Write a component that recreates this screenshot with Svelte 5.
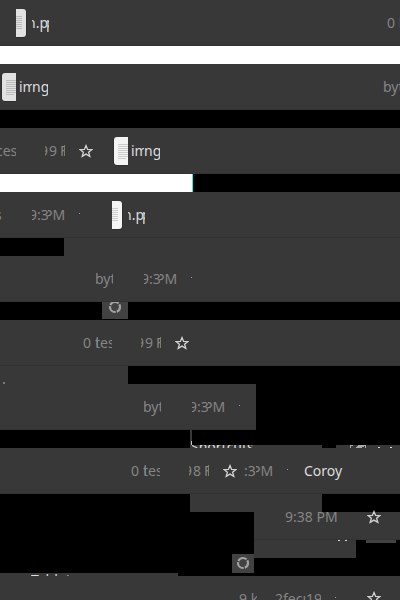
<script>
  // x/y are measured inside each 64px strip; off and up shift the glyphs inside their clip window
  const t = (x, w, s, off = 0, bright = false, y = 13, h = 20, up = 0) => ({ k: 'text', x, y, w, h, s, off, bright, up });
  const box = (x, y, w, h, color) => ({ k: 'box', x, y, w, h, color });
  const star = (x, y = 16) => ({ k: 'star', x, y, w: 14, h: 14 });
  const ring = (x, y, w, h, cx, cy) => ({ k: 'ring', x, y, w, h, cx, cy });
  const doc = (x, w, half, dim = false) => ({ k: 'doc', x, y: 8, w, h: 30, half, dim });
  const dot = (x, y = 21) => box(x, y, 1, 1, '#999999');
  const g = '#383838';
  const time = (x) => [t(x, 16, '9:3', -3), t(x + 16, 18, 'PM', -4)];
  const np = (x) => [t(x, 15, 'n.p', -5, true), t(x + 15, 2, 'p', -1, true)];
  const img = (x) => [t(x, 13, 'im', 0, true), t(x + 13, 16, 'ng', 0, true)];
  const date = (x, d) => [t(x, 3, '9', -5), t(x + 4, 9, d), t(x + 16, 3, 'F', -1), t(x + 19, 1, 'l', -1.5)];
  const bytes = (x) => [t(x, 9, '0'), t(x + 12, 3, 'b', 0.5), t(x + 12, 17, 'tes')];

  const strips = [
    { items: [doc(16, 11, 'right', true), ...np(32), t(387, 13, '0 b'), box(0, 46, 400, 18, '#ffffff')] },
    { items: [doc(1, 15, 'left', true), ...img(19), t(383, 17, 'byt')] },
    { items: [t(0, 16, 'ces', -4), ...date(45, '9'), star(79), doc(113, 15, 'left'), ...img(131), box(0, 46, 192, 18, '#ffffff'), box(192, 46, 1, 18, '#00ffff')] },
    { items: [t(0, 2, 's', -5), ...time(32), dot(79), doc(112, 11, 'right'), ...np(128), box(64, 46, 336, 18, g)] },
    { items: [t(96, 17, 'byt', -1), ...time(144), dot(191), ring(102, 46, 26, 17, 13, 5)] },
    { items: [...bytes(83), ...date(141, '9'), star(175), box(0, 46, 128, 18, g), box(3, 62, 2, 2, '#777777')] },
    {
      rowWidth: 256,
      items: [
        t(144, 17, 'byt', -1), ...time(192), dot(239),
        box(190, 46, 2, 18, g), box(190, 61, 132, 3, g), box(336, 61, 64, 3, g),
        box(191, 57, 1, 4, '#b5c8d8'),
        t(192, 64, 'Shortcuts', -1, true, 61, 3, -8),
        box(350, 61, 1, 3, '#aaaaaa'), box(351, 61, 2, 1, '#aaaaaa'),
        box(358, 61, 7, 1, '#aaaaaa'), box(357, 62, 7, 1, '#aaaaaa'), box(356, 63, 6, 1, '#aaaaaa'), box(365, 61, 1, 3, '#aaaaaa'),
        box(378, 63, 2, 1, '#dddddd'), box(390, 63, 2, 1, '#dddddd')
      ]
    },
    { items: [...bytes(131), ...date(189, '8'), star(223), t(244, 12, ':3', 0), t(256, 18, 'PM', -4), dot(287), t(304, 40, 'Coroy', 0, true), box(190, 46, 132, 18, g)] },
    {
      rowWidth: 0,
      items: [
        box(254, 0, 146, 28, g), box(254, 27, 146, 1, '#323232'), box(254, 28, 102, 18, g), box(366, 28, 30, 3, '#424242'),
        t(285, 54, '9:38 PM', 0, false, -5), star(367, -2),
        box(338, 28, 2, 1, '#dddddd'), box(345, 28, 2, 1, '#dddddd'),
        ring(232, 42, 22, 19, 11, 9), box(0, 61, 178, 3, g),
        t(31, 44, 'Tablet', 0, true, 61, 3, -3)
      ]
    },
    { last: true, items: [t(239, 18, '9 k'), t(275, 46, '2fecı19'), dot(335), star(367, 15)] }
  ];
</script>

<main>
  {#each strips as strip}
    <section class:last={strip.last}>
      <div class="row" style:width={`${strip.rowWidth ?? 400}px`}></div>
      {#each strip.items as it}
        <div
          class="piece"
          style:left={`${it.x}px`}
          style:top={`${it.y}px`}
          style:width={`${it.w}px`}
          style:height={`${it.h}px`}
          style:background={it.color}
        >
          {#if it.k === 'text'}
            <span class:bright={it.bright} style:margin-left={`${it.off}px`} style:margin-top={`${it.up}px`}>{it.s}</span>
          {:else if it.k === 'star'}
            <svg width="14" height="14" viewBox="0 0 14 14"><path d="M7 1.6 8.6 5.4 12.9 5.6 9.6 8.3 10.8 12.4 7 10.1 3.2 12.4 4.4 8.3 1.1 5.6 5.4 5.4Z" fill="none" stroke="#d2d2d2" stroke-width="1.3" /></svg>
          {:else if it.k === 'ring'}
            <svg class="ring" width={it.w} height={it.h}><circle cx={it.cx} cy={it.cy} r="5" fill="none" stroke="#a2a2a2" stroke-width="2.2" stroke-dasharray="9.27 1.2" stroke-dashoffset="3.5" /></svg>
          {:else if it.k === 'doc'}
            <svg width={it.w} height="30" viewBox={it.half === 'left' ? '0 0 15 30' : '15 0 11 30'}>
              <rect x="0.5" y="1" width="25" height="28.5" rx="3.5" fill="#252525" />
              <rect x="1" y="1" width="24" height="28" rx="3" fill={it.dim ? '#e2e2e2' : '#f4f4f4'} />
              <path d="M5 8.5H21M5 10.5H21M5 12.5H21M5 14.5H21M5 16.5H21M5 18.5H21M5 20.5H21M5 22.5H13" stroke={it.dim ? '#bdbdbd' : '#cccccc'} />
            </svg>
          {/if}
        </div>
      {/each}
    </section>
  {/each}
</main>

<style>
  :global(body) { margin: 0; background: #000; }
  main { display: flex; flex-direction: column; width: 400px; height: 600px; overflow: hidden; background: #000; }
  section { position: relative; flex: 0 0 64px; }
  section.last { flex-basis: 24px; overflow: hidden; }
  .row { height: 46px; background: #383838; box-shadow: inset 0 -1px #323232; }
  .piece { position: absolute; overflow: hidden; }
  span { display: block; font: 14px/20px "Noto Sans", sans-serif; color: #858585; white-space: nowrap; }
  .bright { color: #dddddd; }
  svg { display: block; }
  .ring { background: #424242; }
</style>
